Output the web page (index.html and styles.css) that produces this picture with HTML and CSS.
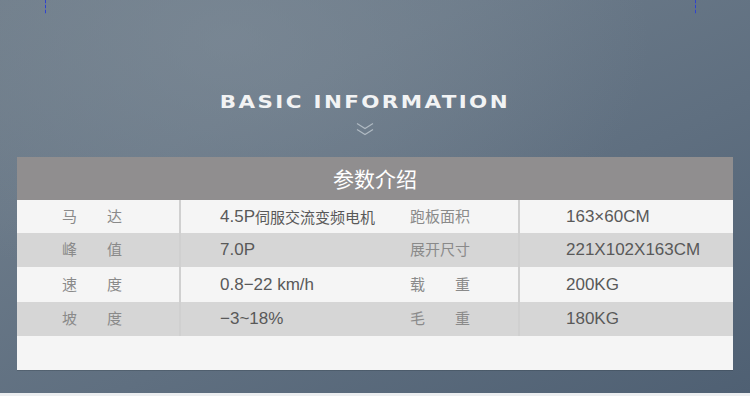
FILE: index.html
```html
<!DOCTYPE html>
<html lang="zh-CN">
<head>
<meta charset="utf-8">
<title>参数介绍</title>
<link rel="stylesheet" href="styles.css">
</head>
<body>
<div class="page">
  <span class="guide guide-left"></span>
  <span class="guide guide-right"></span>
  <div class="heading">
    <h1 class="title">BASIC INFORMATION</h1>
    <svg class="chevrons" width="18" height="14" viewBox="0 0 18 14" aria-hidden="true">
      <path d="M1 1.5 L9 6.5 L17 1.5" />
      <path d="M1 7.5 L9 12.5 L17 7.5" />
    </svg>
  </div>
  <section class="panel">
    <div class="panel-head">参数介绍</div>
    <div class="spec-table">
      <div class="row light">
        <div class="cell c1"><span class="label"><span>马</span><span>达</span></span></div>
        <div class="cell c2 value">4.5P<span class="cjk">伺服交流变频电机</span></div>
        <div class="cell c3"><span class="label">跑板面积</span></div>
        <div class="cell c4 value">163×60CM</div>
      </div>
      <div class="row dark">
        <div class="cell c1"><span class="label"><span>峰</span><span>值</span></span></div>
        <div class="cell c2 value">7.0P</div>
        <div class="cell c3"><span class="label">展开尺寸</span></div>
        <div class="cell c4 value">221X102X163CM</div>
      </div>
      <div class="row light tall">
        <div class="cell c1"><span class="label"><span>速</span><span>度</span></span></div>
        <div class="cell c2 value">0.8−22 km/h</div>
        <div class="cell c3"><span class="label"><span>载</span><span>重</span></span></div>
        <div class="cell c4 value">200KG</div>
      </div>
      <div class="row dark">
        <div class="cell c1"><span class="label"><span>坡</span><span>度</span></span></div>
        <div class="cell c2 value">−3~18%</div>
        <div class="cell c3"><span class="label"><span>毛</span><span>重</span></span></div>
        <div class="cell c4 value">180KG</div>
      </div>
    </div>
    <div class="panel-foot"></div>
  </section>
</div>
<div class="bottom-line"></div>
</body>
</html>
```
FILE: styles.css
```css
* {
  box-sizing: border-box;
}

html, body {
  margin: 0;
  padding: 0;
}

body {
  width: 750px;
  height: 396px;
  overflow: hidden;
  font-family: "Liberation Sans", "Noto Sans CJK SC", sans-serif;
  background: #eceef0;
}

.page {
  position: relative;
  height: 393px;
  padding-top: 93px;
  display: flex;
  flex-direction: column;
  background:
    radial-gradient(ellipse 420px 260px at 230px 40px, rgba(130, 143, 155, 0.55), rgba(130, 143, 155, 0) 100%),
    linear-gradient(155deg, #6f7d8a 0%, #6a7988 30%, #5f6f80 60%, #4f6073 100%);
}

.guide {
  position: absolute;
  top: 0;
  width: 1px;
  height: 14px;
  background: repeating-linear-gradient(to bottom, #2f43cf 0 3px, rgba(47, 67, 207, 0.25) 3px 5px);
}

.guide-left {
  left: 45px;
}

.guide-right {
  left: 695px;
}

.heading {
  display: flex;
  flex-direction: column;
  align-items: center;
  padding-right: 20px;
}

.title {
  margin: 0;
  font-family: "DejaVu Sans", sans-serif;
  font-weight: bold;
  font-size: 18px;
  line-height: 18px;
  letter-spacing: 2px;
  color: #f2f3f4;
  transform: scaleX(1.19);
}

.chevrons {
  display: block;
  margin-top: 11px;
  fill: none;
  stroke: rgba(220, 226, 232, 0.6);
  stroke-width: 1.2;
}

.panel {
  margin: 21px 17px 0;
  background: #f5f5f5;
  box-shadow: 0 1px 0 rgba(40, 50, 60, 0.25);
}

.panel-head {
  height: 43px;
  background: #908e8f;
  color: #ffffff;
  font-family: "Noto Sans CJK SC", sans-serif;
  font-size: 21px;
  line-height: 43px;
  text-align: center;
}

.row {
  display: grid;
  grid-template-columns: 164px 229px 110px 213px;
  height: 34px;
  align-items: center;
}

.row:first-child {
  height: 33px;
}

.row.tall {
  height: 35px;
}

.light {
  background: #f5f5f5;
}

.dark {
  background: #d6d6d6;
}

.cell {
  height: 100%;
  display: flex;
  align-items: center;
  white-space: nowrap;
}

.c1 {
  padding-left: 45px;
  border-right: 2px solid #d0d0d0;
}

.c2 {
  padding-left: 39px;
}

.c3 {
  border-right: 2px solid #d0d0d0;
}

.c4 {
  padding-left: 46px;
}

.label {
  display: inline-flex;
  justify-content: space-between;
  width: 60px;
  margin-bottom: 2px;
  font-family: "Noto Sans CJK SC", sans-serif;
  font-size: 15px;
  line-height: 20px;
  color: #8a8a8a;
}

.value {
  font-size: 17px;
  color: #595959;
}

.cjk {
  font-family: "Noto Sans CJK SC", sans-serif;
  font-size: 15px;
  line-height: 20px;
}

.panel-foot {
  height: 34px;
}

.bottom-line {
  height: 3px;
  background: #eceef0;
}
```
